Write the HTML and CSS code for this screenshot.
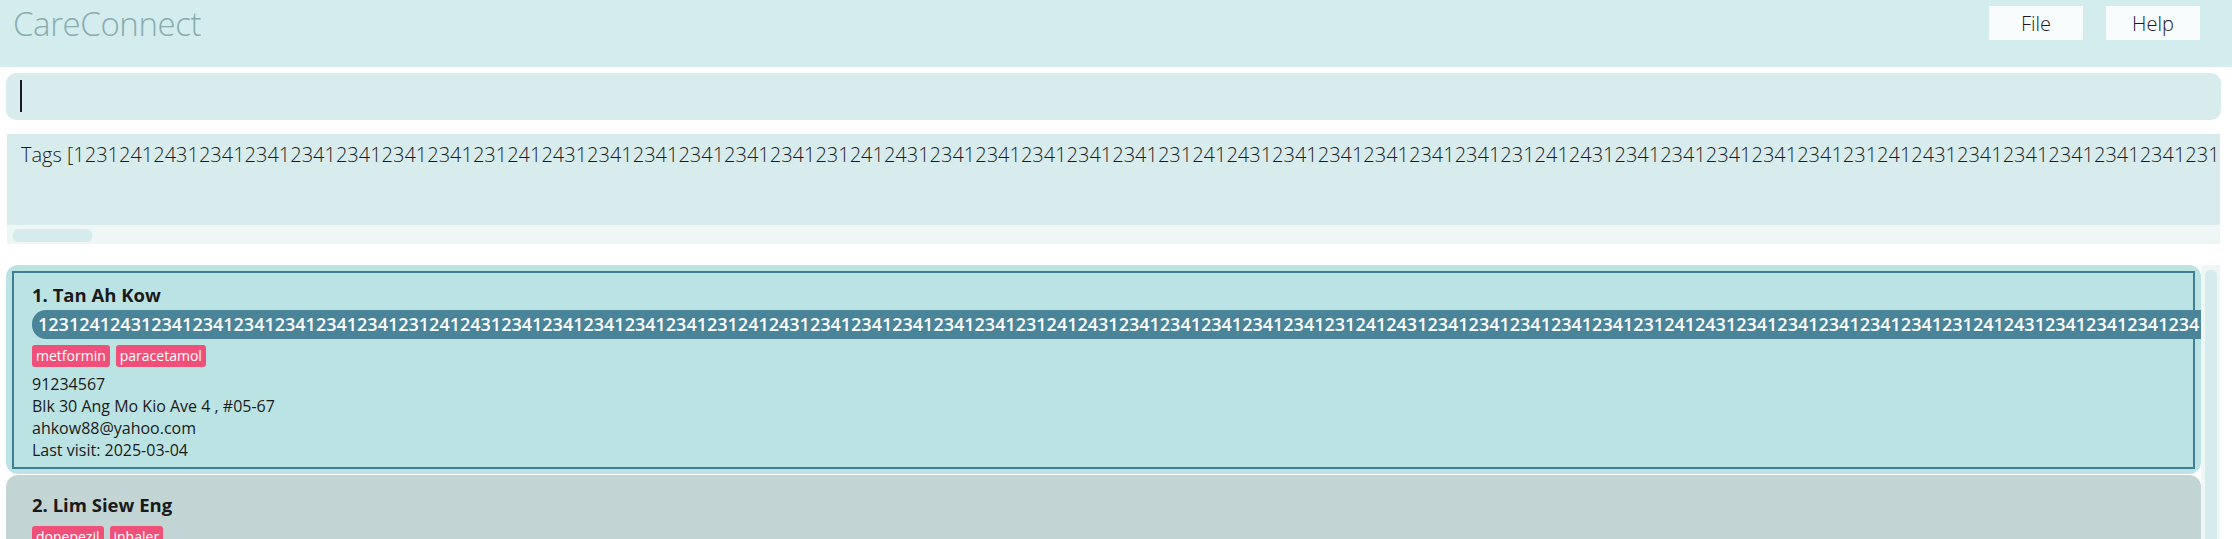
FILE: index.html
```html
<!DOCTYPE html>
<html>
<head>
<meta charset="utf-8">
<title>CareConnect</title>
<link rel="stylesheet" href="styles.css">
</head>
<body>
<header class="topbar">
  <div class="brand">CareConnect</div>
  <nav class="menu">
    <button class="menu-btn">File</button>
    <button class="menu-btn">Help</button>
  </nav>
</header>
<div class="command">
  <span class="caret"></span>
</div>
<section class="result">
  <div class="result-text">Tags [123124124312341234123412341234123412312412431234123412341234123412312412431234123412341234123412312412431234123412341234123412312412431234123412341234123412312412431234123412341234123412312412431234123412341234123412312412431234123412341234123412312412431234123412341234123412312412431234123412341234123412312412431234123412341234</div>
  <div class="hscroll"><div class="hthumb"></div></div>
</section>
<section class="list">
  <div class="cards">
    <article class="card selected">
      <div class="card-inner">
        <div class="name">1. Tan Ah Kow</div>
        <div class="pill">123124124312341234123412341234123412312412431234123412341234123412312412431234123412341234123412312412431234123412341234123412312412431234123412341234123412312412431234123412341234123412312412431234123412341234123412312412431234123412341234123412312412431234123412341234123412312412431234123412341234</div>
        <div class="tags"><span class="tag">metformin</span><span class="tag">paracetamol</span></div>
        <div class="line">91234567</div>
        <div class="line">Blk 30 Ang Mo Kio Ave 4 , #05-67</div>
        <div class="line">ahkow88@yahoo.com</div>
        <div class="line">Last visit: 2025-03-04</div>
      </div>
    </article>
    <article class="card">
      <div class="card-inner">
        <div class="name">2. Lim Siew Eng</div>
        <div class="tags"><span class="tag">donepezil</span><span class="tag">inhaler</span></div>
      </div>
    </article>
  </div>
  <div class="vscroll"><div class="vthumb"></div></div>
</section>
</body>
</html>
```
FILE: styles.css
```css
* { box-sizing: border-box; }
html, body { margin: 0; padding: 0; background: #ffffff; overflow: hidden; }
body { width: 2232px; height: 539px; font-family: "Open Sans", "Noto Sans", sans-serif; color: #1b1b1b; }

.topbar {
  height: 67px;
  background: #d3ecee;
  display: flex;
  justify-content: space-between;
  align-items: flex-start;
}
.brand {
  font-weight: 300;
  font-size: 33px;
  color: #88acae;
  padding: 0 0 0 13px;
  line-height: 48px;
  letter-spacing: -0.4px;
}
.menu { display: flex; gap: 23px; padding: 6px 32px 0 0; }
.menu-btn {
  width: 94px; height: 34px;
  border: none; background: #f9fcfc;
  font-family: "Open Sans", sans-serif; font-weight: 300;
  font-size: 20px; color: #1a1a2a; padding: 0;
}

.command {
  margin: 6px 11px 0 6px;
  height: 47px;
  background: #d8ecee;
  border-radius: 10px;
  padding: 7px 0 0 14px;
}
.caret { display: block; width: 2px; height: 32px; background: #1a1a1a; }

.result { margin: 14px 12px 0 7px; height: 110px; }
.result-text {
  height: 91px;
  background: #d8ecee;
  padding: 3px 0 0 14px;
  font-weight: 300;
  font-size: 20px;
  line-height: 36px;
  white-space: nowrap;
  overflow: hidden;
  color: #1a1a1a;
}
.hscroll { height: 19px; background: #eff6f6; padding: 4px 0 0 6px; }
.hthumb { width: 79px; height: 13px; background: #d6ebeb; border-radius: 5px; }

.list { margin: 21px 12px 0 6px; display: flex; height: 274px; overflow: hidden; }
.cards { flex: 1; display: flex; flex-direction: column; gap: 1px; min-width: 0; }
.card {
  flex-shrink: 0;
  border-radius: 12px;
  background: #c3d4d4;
  padding: 6px 6px 5px 6px;
  overflow: hidden;
}
.card.selected { background: #bce3e3; }
.card-inner {
  border: 2px solid transparent;
  padding: 8px 0 6px 18px;
}
.card.selected .card-inner { border-color: #3f7e95; }
.name { font-weight: 700; font-size: 18.5px; line-height: 28px; color: #1a1a1a; }
.pill {
  margin-top: 1px;
  height: 29px;
  line-height: 29px;
  background: #4a8499;
  color: #ffffff;
  border-radius: 14px 0 0 14px;
  padding: 0 0 0 6px;
  font-size: 18px;
  font-weight: 600;
  white-space: nowrap;
  margin-right: -10px;
  overflow: hidden;
}
.tags { display: flex; gap: 6px; margin-top: 6px; height: 22px; }
.name + .tags { margin-top: 7px; }
.tag {
  background: #ef5079;
  color: #ffffff;
  border-radius: 3px;
  font-size: 14px;
  line-height: 22px;
  padding: 0 4px;
}
.line { font-size: 16px; line-height: 22px; color: #1a1a1a; }
.tags + .line { margin-top: 6px; }

.vscroll { width: 19px; background: #eef6f6; padding: 5px 3px 0 4px; flex-shrink: 0; }
.vthumb { height: 400px; background: #d6ebeb; border-radius: 5px; }
```
